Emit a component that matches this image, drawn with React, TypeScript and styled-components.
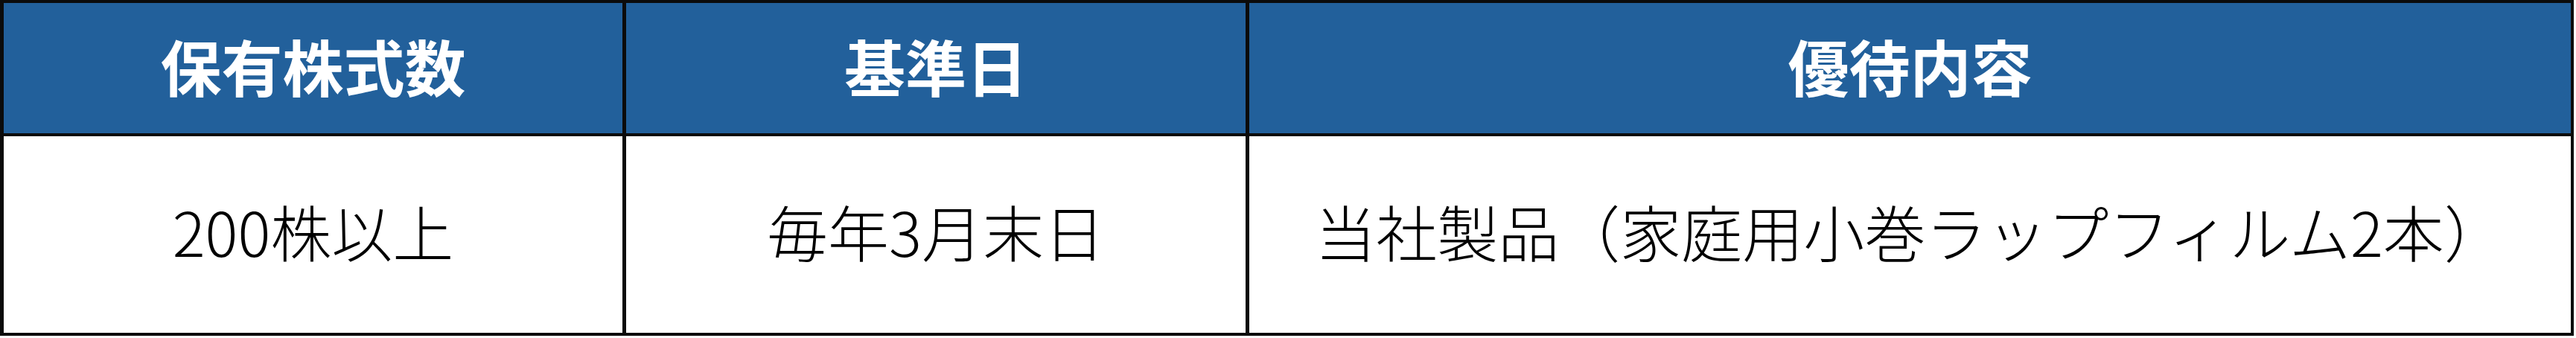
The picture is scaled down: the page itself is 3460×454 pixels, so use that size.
import styled, { createGlobalStyle } from 'styled-components'

const GlobalStyle = createGlobalStyle`
  html, body {
    margin: 0;
    padding: 0;
    background: #ffffff;
  }
`

const headers = ['保有株式数', '基準日', '優待内容']
const values = ['200株以上', '毎年3月末日', '当社製品（家庭用小巻ラップフィルム2本）']

export default function App() {
  return (
    <>
      <GlobalStyle />
      <Table>
        {headers.map(h => (
          <HeadCell key={h}>{h}</HeadCell>
        ))}
        {values.map(v => (
          <BodyCell key={v}>{v}</BodyCell>
        ))}
      </Table>
    </>
  )
}

const Table = styled.div`
  display: grid;
  grid-template-columns: 831px 832px 1775px;
  grid-template-rows: 175px 264px;
  column-gap: 5px;
  row-gap: 4px;
  width: max-content;
  padding: 4px 4px 4px 5px;
  background: #0b0b0b;
  font-family: 'Noto Sans CJK JP', 'Noto Sans', sans-serif;
`

const Cell = styled.div`
  display: flex;
  align-items: center;
  justify-content: center;
  font-size: 82px;
  line-height: 1;
  white-space: nowrap;
`

const HeadCell = styled(Cell)`
  background: #22609b;
  color: #ffffff;
  font-weight: 700;
  padding-bottom: 8px;
`

const BodyCell = styled(Cell)`
  background: #ffffff;
  color: #000000;
  font-weight: 300;
  padding-bottom: 10px;
`
